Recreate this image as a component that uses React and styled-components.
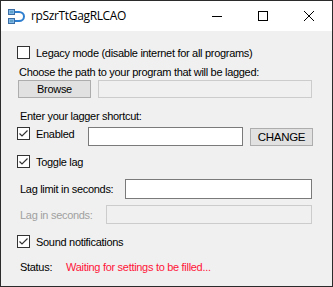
import React from "react";
import styled, { createGlobalStyle } from "styled-components";

const GlobalStyle = createGlobalStyle`
  html, body {
    margin: 0;
    padding: 0;
    background: #fff;
  }
  * {
    box-sizing: border-box;
  }
`;

const Window = styled.div`
  width: 333px;
  height: 287px;
  border: 1px solid #2b2b2b;
  display: flex;
  flex-direction: column;
  font-family: "Liberation Sans", Arial, sans-serif;
  font-size: 11px;
  letter-spacing: -0.3px;
  color: #000;
  overflow: hidden;
`;

const TitleBar = styled.div`
  height: 30px;
  flex: none;
  background: #fff;
  display: flex;
  align-items: center;
  padding-left: 7px;
`;

const Title = styled.div`
  font-family: "Open Sans", "Noto Sans", sans-serif;
  font-size: 12px;
  letter-spacing: -0.35px;
  margin-left: 6px;
  flex: 1;
  padding-bottom: 1px;
`;

const Caption = styled.div`
  width: 46px;
  height: 30px;
  display: flex;
  align-items: center;
  justify-content: center;
`;

const Body = styled.div`
  flex: 1;
  background: #f0f0f0;
  padding: 15px 20px 0 15px;
  display: flex;
  flex-direction: column;
`;

const Row = styled.div`
  display: flex;
  align-items: ${p => (p.top ? "flex-start" : "center")};
  height: ${p => p.h}px;
  margin-top: ${p => p.mt || 0}px;
  padding-left: ${p => p.pl || 0}px;
`;

const CheckWrap = styled.label`
  display: flex;
  align-items: center;
  flex: none;
  width: ${p => (p.w ? `${p.w}px` : "auto")};
  height: 13px;
`;

const Box = styled.span`
  width: 13px;
  height: 13px;
  border: 1px solid #333;
  background: #fff;
  flex: none;
  margin-left: 1px;
  display: flex;
  align-items: center;
  justify-content: center;
`;

const CheckLabel = styled.span`
  margin-left: 6px;
  padding-top: 1px;
  white-space: nowrap;
`;

const Label = styled.span`
  color: ${p => (p.disabled ? "#a0a0a0" : "#000")};
  white-space: nowrap;
  flex: none;
  width: ${p => (p.w ? `${p.w}px` : "auto")};
`;

const Button = styled.div`
  height: ${p => p.h}px;
  width: ${p => p.w}px;
  flex: none;
  margin-left: ${p => p.ml || 0}px;
  margin-top: ${p => p.mt || 0}px;
  background: #e1e1e1;
  border: 1px solid #adadad;
  display: flex;
  align-items: center;
  justify-content: center;
  font-size: ${p => p.fs || 11}px;
`;

const Input = styled.div`
  height: ${p => p.h || 19}px;
  flex: ${p => (p.w ? "none" : 1)};
  width: ${p => (p.w ? `${p.w}px` : "auto")};
  margin-left: ${p => p.ml || 0}px;
  background: ${p => (p.disabled ? "#f0f0f0" : "#fff")};
  border: 1px solid ${p => (p.disabled ? "#cccccc" : "#7a7a7a")};
`;

const Status = styled.span`
  color: #ff1438;
  white-space: nowrap;
`;

const Check = ({ checked, w, children }) => (
  <CheckWrap w={w}>
    <Box>
      {checked && (
        <svg width="11" height="11" viewBox="0 0 11 11">
          <path d="M1.5 5.5 L4 8 L9.5 2.5" fill="none" stroke="#333" strokeWidth="1.2" />
        </svg>
      )}
    </Box>
    <CheckLabel>{children}</CheckLabel>
  </CheckWrap>
);

const AppIcon = () => (
  <svg width="17" height="15" viewBox="0 0 17 15">
    <path d="M6 3 H11 A5 4.5 0 0 1 11 12 H6" fill="none" stroke="#2f7fd0" strokeWidth="2" />
    <rect x="0.5" y="0.5" width="6" height="5" fill="#7fb8e8" stroke="#3a6ea5" />
    <rect x="0.5" y="9.5" width="6" height="5" fill="#7fb8e8" stroke="#3a6ea5" />
    <rect x="2" y="2" width="3" height="2" fill="#5ea0c8" />
    <rect x="2" y="11" width="3" height="2" fill="#5ea0c8" />
  </svg>
);

export default function App() {
  return (
    <>
      <GlobalStyle />
      <Window>
        <TitleBar>
          <AppIcon />
          <Title>rpSzrTtGagRLCAO</Title>
          <Caption>
            <svg width="10" height="10" viewBox="0 0 10 10">
              <path d="M0 5.5 H10" stroke="#000" strokeWidth="1" />
            </svg>
          </Caption>
          <Caption>
            <svg width="10" height="10" viewBox="0 0 10 10">
              <rect x="0.5" y="0.5" width="9" height="9" fill="none" stroke="#000" />
            </svg>
          </Caption>
          <Caption>
            <svg width="10" height="10" viewBox="0 0 10 10">
              <path d="M0 0 L10 10 M10 0 L0 10" stroke="#000" strokeWidth="1" />
            </svg>
          </Caption>
        </TitleBar>
        <Body>
          <Row h={13}>
            <Check>Legacy mode (disable internet for all programs)</Check>
          </Row>
          <Row h={13} mt={6} pl={3}>
            <Label>Choose the path to your program that will be lagged:</Label>
          </Row>
          <Row h={18} mt={2} pl={2}>
            <Button w={73} h={18}>Browse</Button>
            <Input disabled ml={7} h={18} />
          </Row>
          <Row h={13} mt={11} pl={4}>
            <Label>Enter your lagger shortcut:</Label>
          </Row>
          <Row h={19} mt={5} top>
            <Check checked w={72}>Enabled</Check>
            <Input w={155} h={19} />
            <Button w={63} h={18} fs={11.5} ml={7} mt={1}>
              CHANGE
            </Button>
          </Row>
          <Row h={13} mt={9}>
            <Check checked>Toggle lag</Check>
          </Row>
          <Row h={20} mt={11} pl={4}>
            <Label w={105}>Lag limit in seconds:</Label>
            <Input h={20} />
          </Row>
          <Row h={19} mt={6} pl={4}>
            <Label w={86} disabled>Lag in seconds:</Label>
            <Input disabled h={19} />
          </Row>
          <Row h={13} mt={11}>
            <Check checked>Sound notifications</Check>
          </Row>
          <Row h={13} mt={12} pl={4}>
            <Label w={46}>Status:</Label>
            <Status>Waiting for settings to be filled...</Status>
          </Row>
        </Body>
      </Window>
    </>
  );
}
